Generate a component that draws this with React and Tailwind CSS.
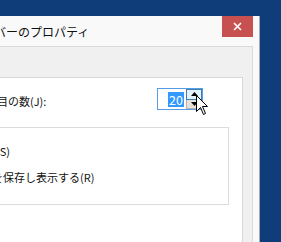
import React from 'react';

const jp = { fontFamily: '"Noto Sans CJK JP", "Noto Sans", sans-serif' };

const Cursor = () => (
  <svg className="absolute left-[196px] top-[95px]" width="13" height="21" viewBox="0 0 13 21">
    <path d="M0.5 0.5 V16.5 L4.5 12.5 L7.5 19.5 L9.5 18.5 L6.5 11.5 L11.5 11.5 Z" fill="#fff" stroke="#000" strokeWidth="1" strokeLinejoin="miter" />
  </svg>
);

const SpinBox = ({ value }) => (
  <div className="w-[46px] h-[22px] border border-[#569de5] bg-white flex items-center">
    <div className="flex-1 flex justify-end pr-[2px]">
      <span className="bg-[#3399ff] text-white text-[12.5px] leading-[15px] px-[1px]">{value}</span>
    </div>
    <div className="w-[16px] h-full flex flex-col">
      <div className="flex-1 bg-[#e5f1fb] border border-[#3c7fb1] flex items-center justify-center">
        <svg width="7" height="4" viewBox="0 0 7 4"><path d="M3.5 0 L7 4 H0 Z" fill="#000" /></svg>
      </div>
      <div className="flex-1 bg-[#e6e1da] border border-[#b9b2aa] border-t-0 flex items-center justify-center">
        <svg width="7" height="4" viewBox="0 0 7 4"><path d="M0 0 H7 L3.5 4 Z" fill="#000" /></svg>
      </div>
    </div>
  </div>
);

export default function App() {
  return (
    <div className="w-[281px] h-[242px] bg-[#0e3d7a] overflow-hidden relative" style={jp}>
      <div className="mt-[16px] w-[260px] h-[226px] bg-[#f9f9f9] border-r border-[#a9a9a9] flex flex-col">
        {/* title bar */}
        <div className="h-[30px] shrink-0 flex items-start">
          <div className="flex-1 ml-[-6px] pt-[8px] text-[12px] leading-[16px] text-[#111] whitespace-nowrap">
            バーのプロパティ
          </div>
          <div className="w-[31px] h-[21px] bg-[#c75050] mr-[6px] flex items-center justify-center">
            <svg width="9" height="9" viewBox="0 0 9 9">
              <path d="M1 1 L8 8 M8 1 L1 8" stroke="#fff" strokeWidth="1.6" />
            </svg>
          </div>
        </div>

        {/* client area */}
        <div className="flex-1 w-[253px] bg-[#f0f0f0] border-t border-r border-[#dadada] pt-[30px]">
          <div className="w-[243px] h-full bg-white border-t border-r border-[#d9d9d9] pt-[10px] text-[11px] text-[#111]">
            <div className="flex items-center">
              <div className="w-[171px] ml-[-14px] pt-[3px] whitespace-nowrap leading-[16px]">項目の数(J):</div>
              <SpinBox value="20" />
            </div>

            <div className="mt-[17px] ml-[-10px] w-[239px] h-[78px] border border-[#dcdcdc] pt-[15px]">
              <div className="ml-[5px] leading-[16px] whitespace-nowrap">(S)</div>
              <div className="mt-[10px] ml-[1px] leading-[16px] whitespace-nowrap">を保存し表示する(R)</div>
            </div>
          </div>
        </div>
      </div>
      <Cursor />
    </div>
  );
}
